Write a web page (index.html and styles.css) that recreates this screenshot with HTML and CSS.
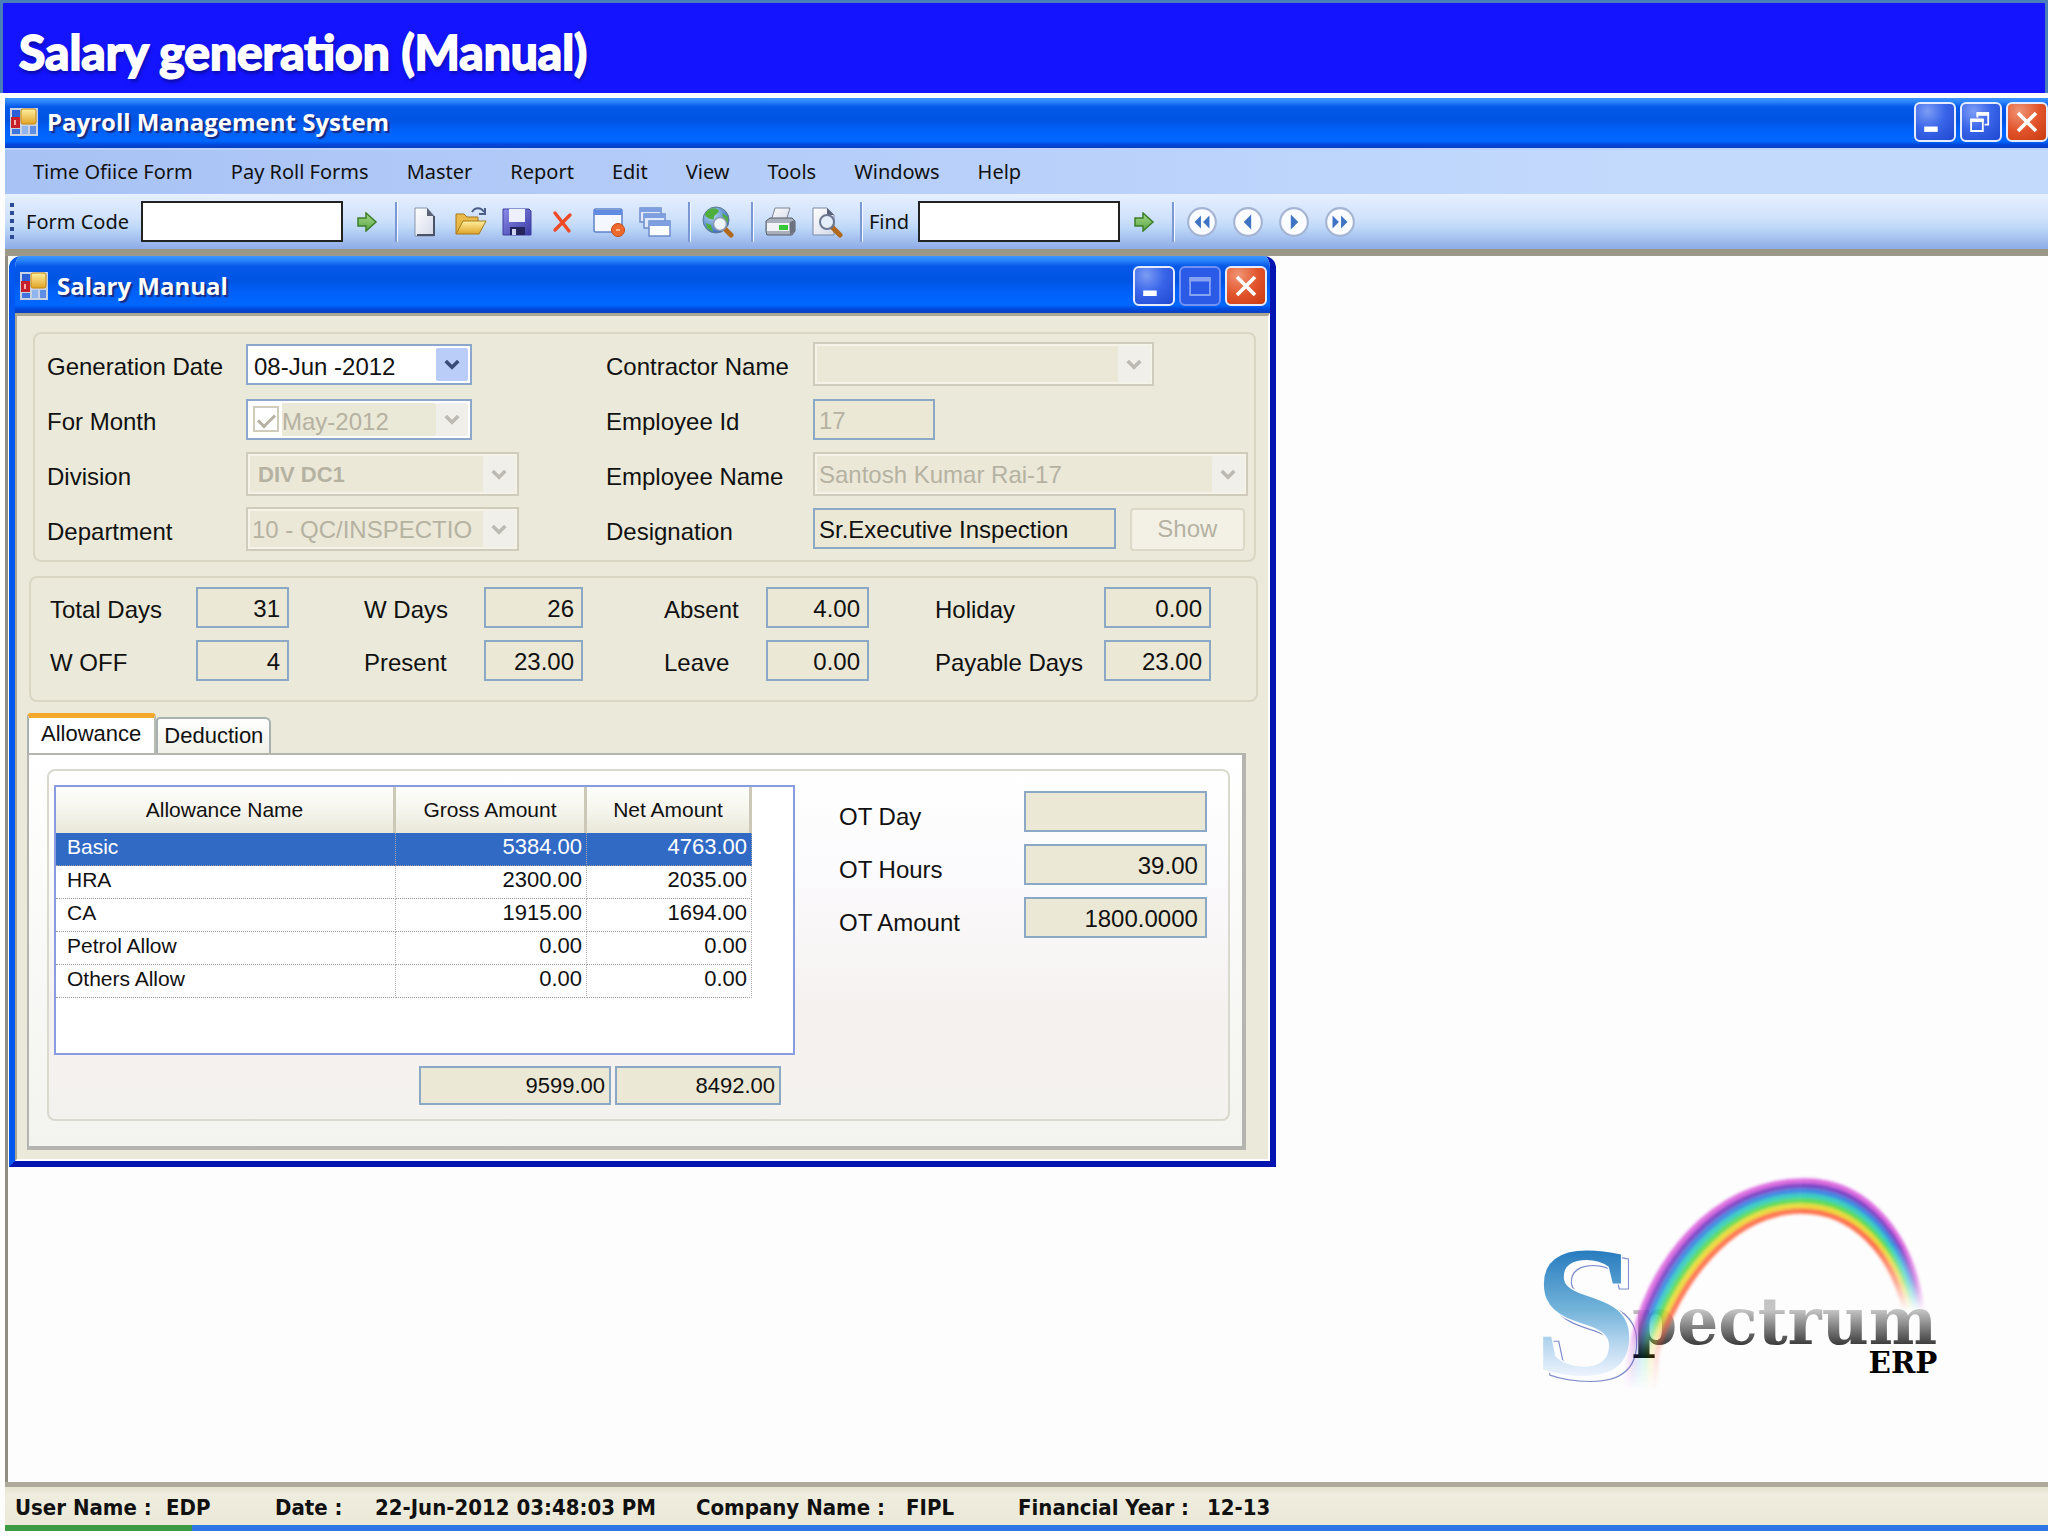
FILE: index.html
```html
<!DOCTYPE html>
<html lang="en">
<head>
<meta charset="utf-8">
<meta name="viewport" content="width=device-width, initial-scale=1">
<title>Salary generation (Manual)</title>
<link rel="stylesheet" href="styles.css">
</head>
<body>
<svg class="defs" aria-hidden="true">
  <defs>
    <linearGradient id="gGreen" x1="0" y1="0" x2="0" y2="1"><stop offset="0" stop-color="#a5d98a"/><stop offset="1" stop-color="#5aa542"/></linearGradient>
    <linearGradient id="gGold" x1="0" y1="0" x2="0" y2="1"><stop offset="0" stop-color="#fff0a0"/><stop offset="1" stop-color="#e0a428"/></linearGradient>
    <linearGradient id="gDisk" x1="0" y1="0" x2="1" y2="1"><stop offset="0" stop-color="#8c8cea"/><stop offset="1" stop-color="#3a3aa4"/></linearGradient>
    <linearGradient id="gPaper" x1="0" y1="0" x2="1" y2="1"><stop offset="0" stop-color="#ffffff"/><stop offset="1" stop-color="#d3d9e8"/></linearGradient>
    <radialGradient id="gGlobe" cx=".35" cy=".3" r=".8"><stop offset="0" stop-color="#b5dcf5"/><stop offset="1" stop-color="#2c5fb5"/></radialGradient>
  </defs>
  <symbol id="app" viewBox="0 0 28 28">
    <rect x="0" y="0" width="28" height="28" fill="#c9d2e2"/>
    <rect x="2" y="2" width="8" height="7" fill="#2a5fd8"/>
    <rect x="1" y="9" width="9" height="11" fill="#c8202a"/><rect x="4" y="12" width="2" height="5" fill="#f7b0a8"/>
    <rect x="11" y="1" width="15" height="15" rx="2" fill="url(#gGold)" stroke="#c98a10"/>
    <rect x="2" y="21" width="8" height="5" fill="#3f74dc"/><rect x="12" y="18" width="6" height="8" fill="#8fb4ee"/><rect x="20" y="18" width="6" height="8" fill="#5d8ee4"/>
  </symbol>
  <symbol id="go" viewBox="0 0 22 20"><path d="M2 6h8V1l10 9-10 9v-5H2z" fill="url(#gGreen)" stroke="#3c7f2a" stroke-width="1.5"/></symbol>
  <symbol id="new" viewBox="0 0 32 32"><path d="M6 2h12l7 8v20H6z" fill="url(#gPaper)" stroke="#8a94ac" stroke-width="1"/><path d="M18 2v8h7" fill="#5a6377"/><path d="M25 10v19H8" fill="none" stroke="#4b5368" stroke-width="2"/></symbol>
  <symbol id="open" viewBox="0 0 34 32"><path d="M2 28V8h8l3 3h11v6" fill="#e9b94a" stroke="#a5791a"/><path d="M2 28l7-13h23l-7 13z" fill="url(#gGold)" stroke="#a5791a"/><path d="M18 6c3-5 9-5 12 0m1-4v6h-6" fill="none" stroke="#4b5f86" stroke-width="2"/></symbol>
  <symbol id="save" viewBox="0 0 32 32"><path d="M2 3h26l2 2v24H2z" fill="url(#gDisk)" stroke="#3f3fa0"/><path d="M8 3h16v13H8z" fill="#eef0fb"/><path d="M9 21h15v8H9z" fill="#23255c"/><path d="M11 23h4v6h-4z" fill="#cfd4f2"/></symbol>
  <symbol id="del" viewBox="0 0 22 24"><path d="M3 3l14 18M18 5L3 20" fill="none" stroke="#ee4a26" stroke-width="3.4" stroke-linecap="round"/></symbol>
  <symbol id="winx" viewBox="0 0 34 32"><rect x="2" y="3" width="28" height="23" rx="2" fill="#f4f7fd" stroke="#5f83c8" stroke-width="1.5"/><path d="M2 4h28v5H2z" fill="#5f8ae0"/><circle cx="26" cy="24" r="6.5" fill="#ee6a2c" stroke="#c04a14"/><path d="M24 24h4" stroke="#f9b890" stroke-width="2"/></symbol>
  <symbol id="casc" viewBox="0 0 34 32"><g stroke="#6c8ccc" stroke-width="1.5" fill="#dfe9fb"><rect x="2" y="2" width="21" height="14"/><rect x="6" y="8" width="21" height="14"/><rect x="11" y="15" width="21" height="15" fill="#fdfeff"/></g><path d="M2 2h21v4H2zM6 8h21v4H6zM11 15h21v5H11z" fill="#7d9fe0"/></symbol>
  <symbol id="globe" viewBox="0 0 34 32"><circle cx="15" cy="14" r="13" fill="url(#gGlobe)" stroke="#5b7896"/><path d="M6 5c5-4 10-3 12 0-2 4-6 4-5 8-4 1-9-2-9-5zM21 7l6 4v6l-4-3zM5 17l5 2 2 7-6-4z" fill="#4fae3e"/><path d="M23 22l7 7" stroke="#b0681c" stroke-width="5" stroke-linecap="round"/><circle cx="19" cy="18" r="6.5" fill="#eef5fd" stroke="#8c9bb4" stroke-width="1.5"/></symbol>
  <symbol id="print" viewBox="0 0 34 32"><path d="M11 2h15l-4 13H7z" fill="url(#gPaper)" stroke="#7d8595"/><path d="M2 15l4-3h22l3 3v10l-3 4H3l-1-3z" fill="#a9afbb" stroke="#565c68"/><path d="M3 17h22v8H3z" fill="#f0f2f5"/><path d="M15 19h9v5h-9z" fill="#35c63a"/><path d="M26 16l5-2v11l-5 4z" fill="#6c727e"/></symbol>
  <symbol id="prev" viewBox="0 0 34 32"><path d="M3 2h14l7 7v20H3z" fill="url(#gPaper)" stroke="#7c88a4"/><path d="M17 2v7h7" fill="#5a6377"/><path d="M22 21l8 8" stroke="#b0681c" stroke-width="5" stroke-linecap="round"/><circle cx="17" cy="16" r="7" fill="#e4eefa" stroke="#6b7890" stroke-width="2"/></symbol>
  <symbol id="disc" viewBox="0 0 30 30"><circle cx="15" cy="15" r="13" fill="#fbfcff" stroke="#a4b4d2" stroke-width="2"/></symbol>
  <symbol id="chev" viewBox="0 0 20 14"><path d="M3 3l7 7 7-7" fill="none" stroke="currentColor" stroke-width="4"/></symbol>
</svg>

<header class="banner"><h1>Salary generation (Manual)</h1></header>

<div class="app">
  <div class="titlebar">
    <svg class="appicon"><use href="#app"/></svg>
    <span class="title">Payroll Management System</span>
    <div class="winbtns">
      <button class="wb" type="button" aria-label="Minimize"><svg viewBox="0 0 42 40"><path d="M9 25h15v6H9z" fill="#fff"/></svg></button>
      <button class="wb" type="button" aria-label="Restore"><svg viewBox="0 0 42 40"><g fill="none" stroke="#fff" stroke-width="2"><path d="M17 15V11h12v12h-4"/><path d="M10 18h13v12H10z"/></g><path d="M16 9h14v4H16zM9 16h15v4H9z" fill="#fff"/></svg></button>
      <button class="wb close" type="button" aria-label="Close"><svg viewBox="0 0 42 40"><path d="M11 10l20 20M31 10L11 30" stroke="#fff" stroke-width="4"/></svg></button>
    </div>
  </div>

  <nav class="menu">
    <a href="#">Time Ofiice Form</a><a href="#">Pay Roll Forms</a><a href="#">Master</a><a href="#">Report</a><a href="#">Edit</a><a href="#">View</a><a href="#">Tools</a><a href="#">Windows</a><a href="#">Help</a>
  </nav>

  <div class="toolbar">
    <span class="grip"></span>
    <label for="code">Form Code</label><input id="code" class="tbox" type="text">
    <button class="tb go" type="button" aria-label="Go"><svg><use href="#go"/></svg></button>
    <span class="sep"></span>
    <button class="tb" type="button" aria-label="New"><svg><use href="#new"/></svg></button>
    <button class="tb" type="button" aria-label="Open"><svg><use href="#open"/></svg></button>
    <button class="tb" type="button" aria-label="Save"><svg><use href="#save"/></svg></button>
    <button class="tb small" type="button" aria-label="Delete"><svg><use href="#del"/></svg></button>
    <button class="tb" type="button" aria-label="Close window"><svg><use href="#winx"/></svg></button>
    <button class="tb" type="button" aria-label="Cascade"><svg><use href="#casc"/></svg></button>
    <span class="sep"></span>
    <button class="tb" type="button" aria-label="Search"><svg><use href="#globe"/></svg></button>
    <span class="sep"></span>
    <button class="tb" type="button" aria-label="Print"><svg><use href="#print"/></svg></button>
    <button class="tb" type="button" aria-label="Preview"><svg><use href="#prev"/></svg></button>
    <span class="sep"></span>
    <div class="find"><label for="find">Find</label><input id="find" class="tbox" type="text"></div>
    <button class="tb go" type="button" aria-label="Find"><svg><use href="#go"/></svg></button>
    <span class="sep"></span>
    <button class="tb" type="button" aria-label="First"><svg viewBox="0 0 30 30"><use href="#disc"/><path d="M14 9v12l-6-6zM22 9v12l-6-6z" fill="#3f74c4"/></svg></button>
    <button class="tb" type="button" aria-label="Previous"><svg viewBox="0 0 30 30"><use href="#disc"/><path d="M18 8v14l-7-7z" fill="#3f74c4"/></svg></button>
    <button class="tb" type="button" aria-label="Next"><svg viewBox="0 0 30 30"><use href="#disc"/><path d="M12 8v14l7-7z" fill="#3f74c4"/></svg></button>
    <button class="tb" type="button" aria-label="Last"><svg viewBox="0 0 30 30"><use href="#disc"/><path d="M8 9v12l6-6zM16 9v12l6-6z" fill="#3f74c4"/></svg></button>
  </div>

  <main class="client">
    <section class="window">
      <div class="titlebar inner">
        <svg class="appicon"><use href="#app"/></svg>
        <span class="title">Salary Manual</span>
        <div class="winbtns">
          <button class="wb" type="button" aria-label="Minimize"><svg viewBox="0 0 42 40"><path d="M9 25h15v6H9z" fill="#fff"/></svg></button>
          <button class="wb off" type="button" aria-label="Maximize" disabled><svg viewBox="0 0 42 40"><path d="M10 12h22v18H10z" fill="none" stroke="#86a2f2" stroke-width="2"/><path d="M9 10h24v5H9z" fill="#86a2f2"/></svg></button>
          <button class="wb close" type="button" aria-label="Close"><svg viewBox="0 0 42 40"><path d="M11 10l20 20M31 10L11 30" stroke="#fff" stroke-width="4"/></svg></button>
        </div>
      </div>
      <form class="form">
        <div class="group fields">
          <label for="gdate">Generation Date</label>
          <div class="combo date"><select id="gdate"><option>08-Jun -2012</option></select><span class="arrow"><svg><use href="#chev"/></svg></span></div>
          <label for="cname">Contractor Name</label>
          <div class="combo dim mid"><select id="cname" disabled><option></option></select><span class="arrow"><svg><use href="#chev"/></svg></span></div>

          <label for="month">For Month</label>
          <div class="combo date month"><input type="checkbox" checked disabled aria-label="Use month"><select id="month" disabled><option>May-2012</option></select><span class="arrow"><svg><use href="#chev"/></svg></span></div>
          <label for="eid">Employee Id</label>
          <input id="eid" class="box id" type="text" value="17" disabled>

          <label for="div">Division</label>
          <div class="combo dim left"><select id="div" class="strong" disabled><option>DIV DC1</option></select><span class="arrow"><svg><use href="#chev"/></svg></span></div>
          <label for="ename">Employee Name</label>
          <div class="combo dim"><select id="ename" disabled><option>Santosh Kumar Rai-17</option></select><span class="arrow"><svg><use href="#chev"/></svg></span></div>

          <label for="dept">Department</label>
          <div class="combo dim left"><select id="dept" disabled><option>10 - QC/INSPECTIO</option></select><span class="arrow"><svg><use href="#chev"/></svg></span></div>
          <label for="desig">Designation</label>
          <div class="pair"><input id="desig" class="box" type="text" value="Sr.Executive Inspection" readonly><button class="show" type="button" disabled>Show</button></div>
        </div>

        <div class="group days">
          <label for="d1">Total Days</label><input id="d1" class="box num w1" value="31" readonly>
          <label for="d2">W Days</label><input id="d2" class="box num w2" value="26" readonly>
          <label for="d3">Absent</label><input id="d3" class="box num w3" value="4.00" readonly>
          <label for="d4">Holiday</label><input id="d4" class="box num" value="0.00" readonly>
          <label for="d5">W OFF</label><input id="d5" class="box num w1" value="4" readonly>
          <label for="d6">Present</label><input id="d6" class="box num w2" value="23.00" readonly>
          <label for="d7">Leave</label><input id="d7" class="box num w3" value="0.00" readonly>
          <label for="d8">Payable Days</label><input id="d8" class="box num" value="23.00" readonly>
        </div>

        <div class="tabs" role="tablist">
          <button class="tab active" type="button" role="tab" aria-selected="true">Allowance</button>
          <button class="tab" type="button" role="tab" aria-selected="false">Deduction</button>
        </div>
        <div class="panel">
          <div class="sheet">
            <div class="allow">
              <div class="tablebox">
                <table>
                  <colgroup><col class="c1"><col class="c2"><col class="c3"></colgroup>
                  <thead><tr><th>Allowance Name</th><th>Gross Amount</th><th>Net Amount</th></tr></thead>
                  <tbody>
                    <tr class="sel"><td>Basic</td><td>5384.00</td><td>4763.00</td></tr>
                    <tr><td>HRA</td><td>2300.00</td><td>2035.00</td></tr>
                    <tr><td>CA</td><td>1915.00</td><td>1694.00</td></tr>
                    <tr><td>Petrol Allow</td><td>0.00</td><td>0.00</td></tr>
                    <tr><td>Others Allow</td><td>0.00</td><td>0.00</td></tr>
                  </tbody>
                </table>
              </div>
              <div class="sums">
                <input class="box num gross" value="9599.00" readonly aria-label="Gross total">
                <input class="box num net" value="8492.00" readonly aria-label="Net total">
              </div>
            </div>
            <div class="ot">
              <label for="o1">OT Day</label><input id="o1" class="box num" value="" readonly>
              <label for="o2">OT Hours</label><input id="o2" class="box num" value="39.00" readonly>
              <label for="o3">OT Amount</label><input id="o3" class="box num" value="1800.0000" readonly>
            </div>
          </div>
        </div>
      </form>
    </section>

    <svg class="logo" viewBox="0 0 1500 810" role="img" aria-label="Spectrum ERP">
      <defs>
        <linearGradient id="lgS" gradientUnits="userSpaceOnUse" x1="0" y1="270" x2="0" y2="690"><stop offset="0" stop-color="#1a72ba"/><stop offset=".5" stop-color="#74b4da"/><stop offset=".75" stop-color="#b9d8f0"/><stop offset="1" stop-color="#f4f7ff"/></linearGradient>
        <linearGradient id="lgT" gradientUnits="userSpaceOnUse" x1="0" y1="480" x2="0" y2="620"><stop offset="0" stop-color="#c4c4c4"/><stop offset=".7" stop-color="#444"/><stop offset="1" stop-color="#000"/></linearGradient>
        <linearGradient id="lgV" gradientUnits="userSpaceOnUse" x1="0" y1="0" x2="0" y2="720"><stop offset="0" stop-color="#fff"/><stop offset=".4" stop-color="#fff"/><stop offset=".55" stop-color="#999"/><stop offset=".67" stop-color="#000"/></linearGradient>
        <linearGradient id="lgL" gradientUnits="userSpaceOnUse" x1="0" y1="0" x2="0" y2="720"><stop offset="0" stop-color="#fff"/><stop offset=".68" stop-color="#eee"/><stop offset=".82" stop-color="#444"/><stop offset="1" stop-color="#000"/></linearGradient>
        <mask id="fade" maskUnits="userSpaceOnUse" x="0" y="0" width="1500" height="810"><rect width="915" height="810" fill="url(#lgL)"/><rect x="905" width="595" height="810" fill="url(#lgV)"/></mask>
        <filter id="soft"><feGaussianBlur stdDeviation="5"/></filter>
        <filter id="echo" x="-20%" y="-10%" width="150%" height="130%">
          <feMorphology in="SourceAlpha" operator="dilate" radius="2" result="fat"/>
          <feComposite in="fat" in2="SourceAlpha" operator="out" result="ring"/>
          <feOffset in="ring" dx="22" dy="14" result="moved"/>
          <feFlood flood-color="#7d8cca"/>
          <feComposite in2="moved" operator="in" result="line"/>
          <feMorphology in="SourceAlpha" operator="dilate" radius="3" result="halo"/>
          <feComposite in="line" in2="halo" operator="out" result="cut"/>
          <feMerge><feMergeNode in="cut"/><feMergeNode in="SourceGraphic"/></feMerge>
        </filter>
      </defs>
      <text class="lg-s" x="100" y="672" fill="url(#lgS)" filter="url(#echo)">S</text>
      <text class="lg-p" x="396" y="582" fill="url(#lgT)">pectrum</text>
      <g mask="url(#fade)" opacity=".88"><g fill="none" stroke-width="17" filter="url(#soft)" transform="translate(-6 8)">
        <path stroke="#d858dc" d="M385 710L399 600C445 334 643 85 920 85C1117 85 1247 262 1272 480"/>
        <path stroke="#6c2fc0" d="M400 710L412 600C460 344 652 100 918 100C1108 100 1236 268 1264 480"/>
        <path stroke="#2878e0" d="M414 710L425 600C475 355 661 115 917 115C1099 115 1226 274 1256 480"/>
        <path stroke="#20c8b8" d="M428 710L438 600C490 365 670 130 915 130C1090 130 1215 280 1248 480"/>
        <path stroke="#48d840" d="M441 710L450 600C505 376 679 145 914 145C1081 145 1205 286 1239 480"/>
        <path stroke="#e8d820" d="M455 710L463 600C520 386 688 160 912 160C1072 160 1194 292 1231 480"/>
        <path stroke="#ff6038" d="M469 710L476 600C535 397 697 175 911 175C1063 175 1184 298 1223 480"/>
      </g></g>
      <text class="lg-e" x="1312" y="668" text-anchor="end">ERP</text>
    </svg>
  </main>

  <footer class="status">
    <span class="s1">User Name :</span><span class="s2">EDP</span><span class="s3">Date :</span><span class="s4">22-Jun-2012 03:48:03 PM</span><span class="s5">Company Name :</span><span class="s6">FIPL</span><span class="s7">Financial Year :</span><span>12-13</span>
  </footer>
  <div class="strip"></div>
</div>
</body>
</html>
```
FILE: styles.css
```css
* { box-sizing: border-box; }
body {
  margin: 0;
  min-height: 100vh;
  display: flex;
  flex-direction: column;
  background: #fdfdfe;
  color: #111;
  font-family: "Liberation Sans", Arial, sans-serif;
  font-size: 24px;
}
button, input, select { font: inherit; color: inherit; margin: 0; }
button { padding: 0; border: 0; background: none; }
svg { display: block; }
.defs { position: absolute; width: 0; height: 0; }

.banner {
  height: 93px;
  padding: 0 16px;
  border: 3px solid #4a7ebb;
  border-bottom: 0;
  background: #1414ff;
  display: flex;
  align-items: center;
}
.banner h1 {
  margin: 0;
  padding-top: 8px;
  color: #fff;
  font: 700 48px/60px Lato, sans-serif;
  text-shadow: 1px 3px 4px rgba(0, 0, 60, .6);
  -webkit-text-stroke: 2px #fff;
}

.app {
  flex: 1;
  display: flex;
  flex-direction: column;
  margin: 5px 0 5px 5px;
}
.titlebar {
  height: 50px;
  display: flex;
  align-items: center;
  gap: 9px;
  padding: 0 0 2px 5px;
  background: linear-gradient(#3d95ff 0, #2b86fb 7%, #0558e8 18%, #0054e3 45%, #0060f8 62%, #0068ff 86%, #0048dc 93%, #0a3ec0 100%);
}
.appicon { width: 28px; height: 28px; }
.title {
  color: #fff;
  font: 700 24px/34px "Open Sans", sans-serif;
  text-shadow: 2px 2px 1px #1a2a80;
}
.winbtns { margin-left: auto; display: flex; gap: 4px; }
.wb {
  width: 42px;
  height: 40px;
  border: 2px solid #e6ecff;
  border-radius: 6px;
  background: radial-gradient(circle at 30% 20%, #7c9cf4, #3a66ea 45%, #1e48d0);
}
.wb svg { width: 38px; height: 36px; }
.wb.off { border-color: #6f92f4; background: #2a5ae6; }
.wb.close { background: radial-gradient(circle at 30% 20%, #f09474, #e2552c 50%, #c83a10); }

.menu {
  height: 46px;
  display: flex;
  align-items: center;
  gap: 38px;
  padding-left: 28px;
  border-top: 2px solid #b9d2fb;
  background: linear-gradient(90deg, #a8c2f5, #c3dafd 80%);
}
.menu a, .toolbar label {
  color: #111;
  text-decoration: none;
  font: 20px/28px "Noto Sans", sans-serif;
}

.toolbar {
  height: 62px;
  display: flex;
  align-items: center;
  gap: 12px;
  padding: 0 5px;
  border-bottom: 7px solid #7088b8;
  border-image: linear-gradient(#6f8ac4 45%, #8c8a76 50%, #9c9a88) 7;
  background: linear-gradient(#e6f0ff, #cfe1fb 45%, #bfd9f8 60%, #8eabe8);
}
.grip { width: 4px; height: 38px; background: repeating-linear-gradient(#2f4a94 0 4px, transparent 4px 8px); }
.tbox { width: 202px; height: 41px; border: 2px solid #222; background: #fff; padding: 0 6px; }
.tb { width: 34px; height: 32px; display: grid; place-items: center; }
.tb svg { width: 34px; height: 32px; }
.tb.go { width: 24px; }
.tb.go svg { width: 22px; height: 20px; }
.tb.small svg { width: 22px; height: 24px; }
.sep { width: 3px; height: 40px; margin: 0 -2px 0 4px; border-left: 2px solid #7c98d4; border-right: 1px solid #f4f8ff; }
.find { display: flex; align-items: center; gap: 9px; margin-left: -4px; }

.client {
  flex: 1;
  position: relative;
  display: flex;
  justify-content: flex-end;
  align-items: flex-end;
  padding: 0 48px 62px 0;
  border-left: 3px solid #8f8e82;
  background: #fdfdfe;
}
.logo { width: 500px; height: 270px; }
.lg-s { font: 700 560px "Liberation Serif", serif; }
.lg-p { font: 700 194px "DejaVu Serif", serif; }
.lg-e { font: 700 88px "DejaVu Serif", serif; }

.window {
  position: absolute;
  left: 1px;
  top: 0;
  width: 62.1%;
  border: 6px solid #0832c8;
  border-color: #0058f0 #0414b0 #0414b0 #0058f0;
  border-top: 0;
  border-radius: 12px 12px 0 0;
  overflow: hidden;
  background: #ebe9d9;
}
.titlebar.inner { height: 57px; margin: 0 -6px; padding: 2px 9px 0 11px; }
.form {
  padding: 16px 10px 9px 12px;
  border: 3px solid #b6b3a0;
  border-width: 3px 2px 2px 2px;
  border-color: #aaa692 #fff #fff #a8a593;
}

.group { border: 2px solid #d9d6c4; border-radius: 8px; }
.group label { padding-top: 5px; }
.fields {
  display: grid;
  grid-template-columns: 199px 360px 207px 1fr;
  grid-auto-rows: 44px;
  row-gap: 11px;
  align-items: center;
  margin: 0 2px 14px 4px;
  padding: 8px 6px 9px 12px;
}
.combo {
  display: flex;
  height: 44px;
  padding: 2px;
  border: 2px solid #8ba8cc;
  background: #fff;
}
.combo select {
  flex: 1;
  min-width: 0;
  border: 0;
  padding: 3px 0 0 4px;
  appearance: none;
  background: none;
  opacity: 1;
}
.combo .arrow { flex: none; width: 32px; display: grid; place-items: center; background: #b9cdf8; color: #3c4c78; border-radius: 2px; }
.combo .arrow svg { width: 18px; height: 13px; }
.combo.date { width: 226px; height: 41px; }
.combo.date select { padding-top: 5px; }
.combo.left { width: 273px; }
.combo.mid { width: 341px; }
.combo.dim, .combo.month { color: #b5b2a2; }
.combo.dim { border-color: #cfccbc; background: #ebe8d8; box-shadow: inset 0 0 0 2px #f5f3e8; }
.combo.dim .arrow, .combo.month .arrow { background: #f0efea; color: #bcbab2; }
.combo.dim select { padding: 0 0 0 2px; color: #b5b2a2; }
.combo.month select { background: #eae8d6; color: #b5b2a2; padding-left: 0; }
.combo.month input {
  appearance: none;
  width: 26px;
  height: 26px;
  margin: 3px;
  border: 2px solid #cfccbc;
  background: #fff;
  display: grid;
  place-items: center;
}
.combo.month input::before { content: ""; width: 14px; height: 7px; border: solid #b5b2a2; border-width: 0 0 3px 3px; transform: rotate(-45deg); }
.combo select.strong { font-weight: 700; font-size: 22px; padding-left: 8px; }

.box {
  width: 100%;
  height: 41px;
  border: 2px solid #8ba8c4;
  background: #ebe8d6;
  padding: 3px 7px 0 4px;
  border-radius: 0;
}
.box:disabled { color: #b5b2a2; }
.box.id { width: 122px; }
.num { text-align: right; }
.pair { display: flex; gap: 14px; padding-right: 3px; }
.show { width: 115px; height: 43px; flex: none; border: 2px solid #dbd8c8; border-radius: 4px; background: #f3f1e6; color: #b5b2a2; }

.days {
  display: grid;
  grid-template-columns: 146px 168px 120px 180px 102px 169px 169px 107px;
  grid-auto-rows: 41px;
  row-gap: 12px;
  align-items: center;
  justify-content: start;
  margin: 0 0 11px;
  padding: 9px 0 19px 19px;
}
.w1 { width: 93px; }
.w2 { width: 99px; }
.w3 { width: 103px; }

.tabs { display: flex; align-items: flex-end; margin-left: -2px; }
.tab {
  height: 36px;
  padding: 0 6px;
  border: 2px solid #a9b0b0;
  border-bottom: 0;
  border-radius: 4px 6px 0 0;
  background: linear-gradient(#fff, #f1f0e8);
  font-size: 22px;
}
.tab.active { height: 40px; padding: 0 13px 4px 12px; border-top: 5px solid #f5a92c; border-radius: 4px 4px 0 0; border-right-color: #b8bab4; background: #fff; }
.panel {
  margin: 0 12px 0 -2px;
  padding: 14px 12px 25px 18px;
  border: 2px solid #b4b5ae;
  border-right-width: 4px;
  border-bottom-width: 4px;
  background: linear-gradient(#fff, #f3f3ef);
}
.sheet {
  display: flex;
  gap: 44px;
  padding: 14px 21px 14px 5px;
  border: 2px solid #d9d9d0;
  border-radius: 8px;
  background: linear-gradient(#fff, #fbfafc 30%, #f5f1ef 70%, #f4f2ef);
}
.allow { width: 741px; flex: none; }
.tablebox { height: 270px; border: 2px solid #8a9ce0; background: #fff; }
table { table-layout: fixed; width: 696px; border-collapse: separate; border-spacing: 0; }
.c1 { width: 340px; }
.c2 { width: 191px; }
.c3 { width: 165px; }
th {
  height: 46px;
  padding: 0;
  border-right: 3px solid #cbc8b8;
  background: linear-gradient(#fefefc, #f4f3ea 60%, #e9e7d8);
  font-size: 21px;
  font-weight: 400;
}
td {
  height: 33px;
  padding: 0 4px 4px 11px;
  border-right: 1px dotted #aaa;
  border-bottom: 1px dotted #999;
  font-size: 21px;
  line-height: 26px;
}
td + td { padding-left: 0; text-align: right; font-size: 22px; }
.sel td { background: #316ac5; color: #fff; }
.sums { display: flex; gap: 4px; justify-content: flex-end; margin: 11px 14px 0 0; }
.sums .box { height: 39px; font-size: 22px; padding: 0 4px 0 0; }
.sums .gross { width: 192px; }
.sums .net { width: 166px; }
.ot {
  flex: 1;
  display: grid;
  grid-template-columns: 1fr 183px;
  grid-auto-rows: 41px;
  row-gap: 12px;
  align-items: center;
  align-content: start;
  padding-top: 6px;
}
.ot label { padding-top: 10px; }

.status {
  height: 43px;
  display: flex;
  align-items: center;
  padding: 3px 0 0 10px;
  border-top: 5px solid #adaa9c;
  background: linear-gradient(#e4e1d0, #efedde 20%, #ebe8d8);
  font: 700 22px/30px "DejaVu Sans Condensed", "Noto Sans", sans-serif;
  white-space: nowrap;
}
.s1 { width: 151px; }
.s2 { width: 109px; }
.s3 { width: 100px; }
.s4 { width: 321px; }
.s5 { width: 210px; }
.s6 { width: 112px; }
.s7 { width: 189px; }
.strip { height: 6px; background: linear-gradient(90deg, #3c9a44 187px, #2f78e4 187px); }
```
